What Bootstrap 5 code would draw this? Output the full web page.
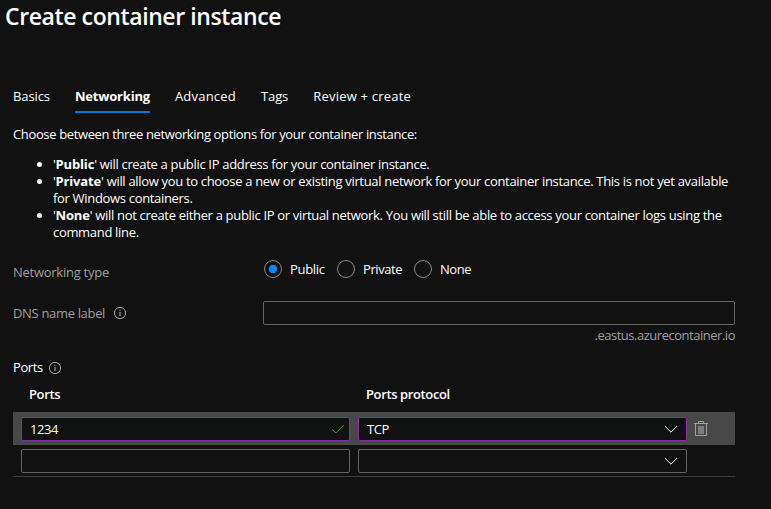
<!DOCTYPE html>
<html lang="en" data-bs-theme="dark">
<head>
<meta charset="utf-8">
<meta name="viewport" content="width=device-width, initial-scale=1">
<title>Create container instance</title>
<link href="https://cdn.jsdelivr.net/npm/bootstrap@5.3.0/dist/css/bootstrap.min.css" rel="stylesheet">
<style>
body{background:#111;color:#fff;font:13px/17px "Open Sans","Noto Sans",sans-serif;letter-spacing:-.33px;overflow:hidden}
.page-title{font-size:23px;line-height:30px;font-weight:600;letter-spacing:-.4px;padding:1px 0 0 5px}
.page-body{width:722px;margin-left:13px}
.wizard-tabs{gap:25px;margin-top:57px;--bs-nav-link-color:#fff;--bs-nav-link-hover-color:#fff;--bs-nav-link-font-size:13px;--bs-nav-link-padding-x:0;--bs-nav-link-padding-y:0}
.wizard-tabs .nav-link{height:25px;border-bottom:2px solid transparent;letter-spacing:-.1px;white-space:nowrap}
.wizard-tabs .nav-link.active{border-color:#0078d4;font-weight:700;letter-spacing:-.19px}
.wizard-tabs .wide{letter-spacing:.21px}
.intro{margin:13px 0 13px;letter-spacing:-.36px}
.options{padding-left:40px;letter-spacing:-.32px}
.options li{white-space:nowrap;height:17px}
.options li.two-line{height:34px}
.options b{letter-spacing:-.15px}
.muted{color:#a19f9d}
.label-col{width:251px;flex:none}
.type-row{margin-top:19px;height:18px}
.type-row .label-col{padding-top:4px;letter-spacing:-.26px}
.form-check.choice{display:flex;align-items:center;padding:0;margin:0;min-height:18px}
.choice .form-check-input{width:18px;height:18px;margin:0 8px 0 0;float:none;background:#111;border:1px solid #8a8886}
.choice .form-check-input:checked{background:radial-gradient(circle,#0a84ff 0 3.9px,transparent 4.6px);border-color:#8a8886}
.choice-public{width:73px}.choice-private{width:77px;letter-spacing:-.42px}.choice-none{letter-spacing:-.45px}
.dns-row{margin-top:23px}
.dns-row .label-col{width:250px;height:24px}
.field{height:24px;min-height:24px;padding:0 8px;border:1px solid #646464;border-radius:2px;background:#111;color:#fff;font-size:13px;line-height:22px;letter-spacing:-.4px}
.field.changed{border-color:#8a2da5}
.suffix{margin-top:2px;letter-spacing:-.48px}
.ports-head{margin-top:15px;letter-spacing:-.4px}
.ports-head svg{margin-left:5px}
.grid-head{line-height:17px;font-weight:600;padding:10px 16px 0;height:36px;letter-spacing:-.38px}
.grid-head .col-ports{width:337px}
.grid-row{padding-left:8px;gap:8px;height:32px}
.grid-row.current{background:#484848;height:33px}
.grid-row .field{width:329px}
.grid-end{border-bottom:1px solid #3f3f3f}
.trash{margin-left:-1px}
svg{flex:none;display:block}
</style>
</head>
<body>
<h1 class="page-title m-0">Create container instance</h1>
<main class="page-body">
  <nav class="nav wizard-tabs">
    <a class="nav-link" href="#">Basics</a>
    <a class="nav-link active" href="#">Networking</a>
    <a class="nav-link wide" href="#">Advanced</a>
    <a class="nav-link" href="#">Tags</a>
    <a class="nav-link wide" href="#">Review + create</a>
  </nav>
  <p class="intro">Choose between three networking options for your container instance:</p>
  <ul class="options mb-0">
    <li>'<b>Public</b>' will create a public IP address for your container instance.</li>
    <li class="two-line">'<b>Private</b>' will allow you to choose a new or existing virtual network for your container instance. This is not yet available<br>for Windows containers.</li>
    <li class="two-line">'<b>None</b>' will not create either a public IP or virtual network. You will still be able to access your container logs using the<br>command line.</li>
  </ul>

  <div class="type-row d-flex">
    <div class="label-col muted">Networking type</div>
    <label class="form-check choice choice-public"><input class="form-check-input" type="radio" name="net" checked>Public</label>
    <label class="form-check choice choice-private"><input class="form-check-input" type="radio" name="net">Private</label>
    <label class="form-check choice choice-none"><input class="form-check-input" type="radio" name="net">None</label>
  </div>

  <div class="dns-row d-flex">
    <div class="label-col muted d-flex align-items-center gap-2">DNS name label
      <svg width="14" height="14" viewBox="0 0 14 14" fill="none" stroke="#a6a6a6"><circle cx="7" cy="7" r="5.6"/><path d="M7 6v4M7 4v1.1" stroke-width="1.2"/></svg>
    </div>
    <div class="flex-grow-1">
      <input class="form-control field" type="text" aria-label="DNS name label">
      <div class="suffix muted text-end">.eastus.azurecontainer.io</div>
    </div>
  </div>

  <div class="ports-head d-flex align-items-center">Ports
    <svg width="14" height="14" viewBox="0 0 14 14" fill="none" stroke="#a6a6a6"><circle cx="7" cy="7" r="5.6"/><path d="M7 6v4M7 4v1.1" stroke-width="1.2"/></svg>
  </div>

  <section>
    <div class="grid-head d-flex"><div class="col-ports">Ports</div><div>Ports protocol</div></div>
    <div class="grid-row current d-flex align-items-center">
      <div class="field changed d-flex align-items-center justify-content-between pe-1">1234
        <svg width="14" height="12" viewBox="0 0 14 12" fill="none" stroke="#57a300"><path d="M1 6.2 4.8 10 12.8 2"/></svg>
      </div>
      <div class="field changed d-flex align-items-center justify-content-between">TCP
        <svg width="14" height="8" viewBox="0 0 14 8" fill="none" stroke="#fff"><path d="M.8 1 7 7.2 13.2 1"/></svg>
      </div>
      <svg class="trash" width="14" height="17" viewBox="0 0 14 17" fill="none" stroke="#a0a0a0"><path d="M0 3.5h14M4.5 3V1.5h5V3M1.5 4v11.5h11V4"/><path d="M4 6h6v8H4z" fill="#7d7d7d" stroke="none"/></svg>
    </div>
    <div class="grid-row grid-end d-flex align-items-center">
      <div class="field"></div>
      <div class="field d-flex align-items-center justify-content-end">
        <svg width="14" height="8" viewBox="0 0 14 8" fill="none" stroke="#fff"><path d="M.8 1 7 7.2 13.2 1"/></svg>
      </div>
    </div>
  </section>
</main>
<script src="https://cdn.jsdelivr.net/npm/bootstrap@5.3.0/dist/js/bootstrap.bundle.min.js"></script>
</body>
</html>
